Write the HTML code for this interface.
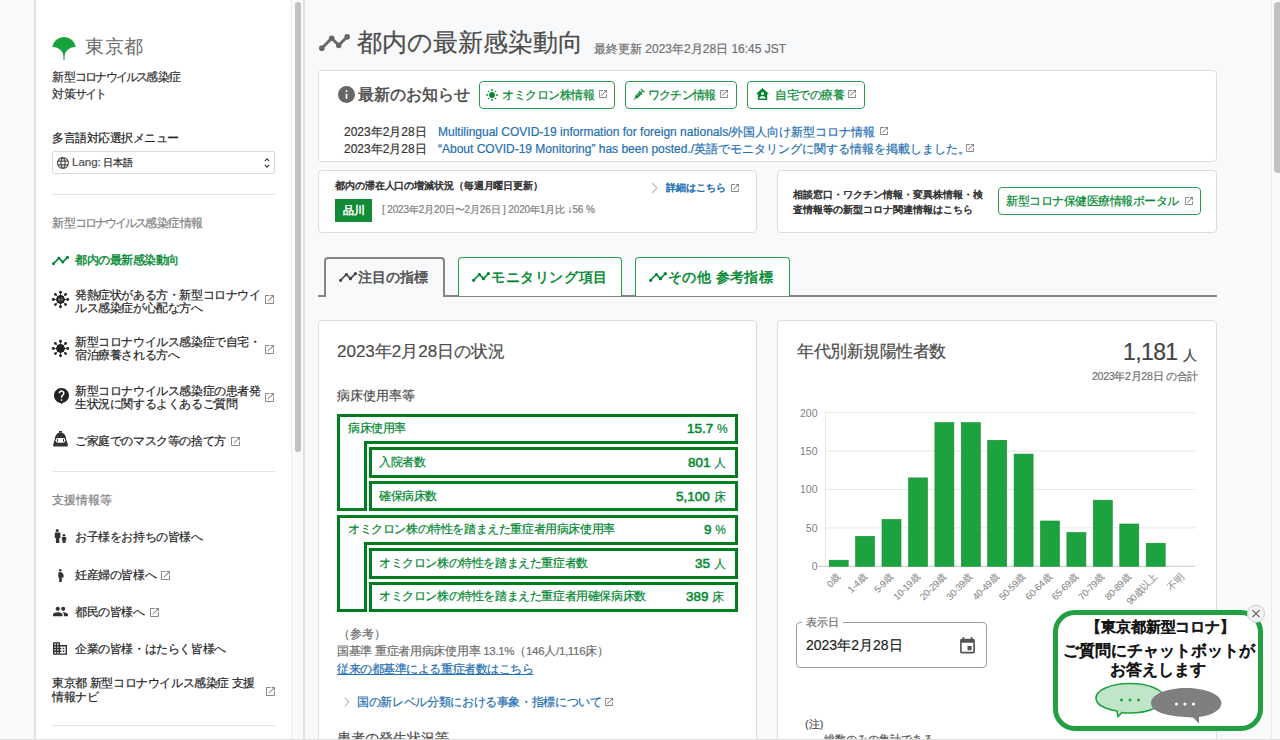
<!DOCTYPE html>
<html lang="ja"><head><meta charset="utf-8">
<style>
html,body{margin:0;padding:0}
body{width:1280px;height:740px;overflow:hidden;position:relative;background:#f8f9fa;font-family:"Liberation Sans",sans-serif;color:#4d4d4d}
.a{position:absolute;white-space:nowrap;line-height:1;-webkit-text-stroke-width:0.2px}
svg{position:absolute;overflow:visible}
.card{position:absolute;background:#fff;border:1px solid #dcdcdc;border-radius:4px;box-sizing:border-box}
.g{color:#008830}
.btn{position:absolute;box-sizing:border-box;border:1px solid #2a9d4b;border-radius:4px;background:#fff}
.hr{position:absolute;height:1px;background:#e3e3e3}
.ext{position:absolute}
.a[style*="font-weight:bold"]{font-weight:normal !important;-webkit-text-stroke-width:0.5px}
</style></head><body>

<!-- ===== SIDEBAR ===== -->
<div style="position:absolute;left:34px;top:0;width:2px;height:740px;background:#e2e2e2"></div>
<div style="position:absolute;left:36px;top:0;width:255px;height:740px;background:#fff"></div>
<!-- sidebar scrollbar -->
<div style="position:absolute;left:291px;top:0;width:14px;height:740px;background:#fafafa"></div>
<div style="position:absolute;left:291px;top:0;width:1px;height:740px;background:#ededed"></div>
<div style="position:absolute;left:303px;top:0;width:2px;height:740px;background:#e0e0e0"></div>
<div style="position:absolute;left:295px;top:2px;width:6px;height:450px;background:#c1c1c1;border-radius:3px"></div>

<!-- logo -->
<svg style="left:52px;top:36px" width="24" height="24" viewBox="0 0 24 24">
<path d="M0.3 11 A11.85 11.85 0 0 1 23.7 11 Q14.6 11.2 12.7 19.2 L12.5 24 L11.5 24 L11.3 19.2 Q9.4 11.2 0.3 11 Z" fill="#1aa33c"/>
</svg>
<div class="a" style="left:85px;top:37.5px;font-size:18.5px;letter-spacing:0.6px;color:#6a6a6a;-webkit-text-stroke-width:0">東京都</div>
<div class="a" style="left:52px;top:69px;font-size:12px;color:#333;line-height:16.5px;letter-spacing:-0.4px;-webkit-text-stroke:0.2px #333">新型<span style="letter-spacing:-1.9px">コロナウイルス</span>感染症<br>対策<span style="letter-spacing:-2.2px">サイト</span></div>

<div class="a" style="left:52px;top:132px;font-size:12px;color:#222;letter-spacing:-0.5px;-webkit-text-stroke:0.2px #222">多言語対応選択メニュー</div>
<div style="position:absolute;left:52px;top:151px;width:223px;height:23px;box-sizing:border-box;border:1px solid #dadada;border-radius:2px;background:#fff"></div>
<svg style="left:57px;top:157px" width="12" height="12" viewBox="2 2 20 20"><path fill="#4d4d4d" d="M16.36,14C16.44,13.34 16.5,12.68 16.5,12C16.5,11.32 16.44,10.66 16.36,10H19.74C19.9,10.64 20,11.31 20,12C20,12.69 19.9,13.36 19.74,14M14.59,19.56C15.19,18.45 15.65,17.25 15.97,16H18.92C17.960,17.65 16.43,18.93 14.59,19.56M14.34,14H9.66C9.56,13.34 9.5,12.68 9.5,12C9.5,11.32 9.56,10.65 9.66,10H14.34C14.43,10.65 14.5,11.32 14.5,12C14.5,12.68 14.43,13.34 14.34,14M12,19.96C11.17,18.76 10.5,17.43 10.090,16H13.91C13.5,17.43 12.83,18.76 12,19.96M8,8H5.08C6.03,6.34 7.57,5.06 9.4,4.44C8.8,5.55 8.35,6.75 8,8M5.08,16H8C8.35,17.25 8.8,18.45 9.4,19.56C7.57,18.93 6.03,17.65 5.080,16M4.26,14C4.1,13.36 4,12.69 4,12C4,11.31 4.1,10.64 4.26,10H7.64C7.56,10.66 7.5,11.32 7.5,12C7.5,12.68 7.56,13.34 7.64,14M12,4.03C12.83,5.23 13.5,6.57 13.91,8H10.09C10.5,6.57 11.17,5.23 12,4.03M18.92,8H15.97C15.65,6.75 15.19,5.55 14.59,4.44C16.43,5.07 17.96,6.34 18.92,8M12,2C6.47,2 2,6.5 2,12A10,10 0 0,0 12,22A10,10 0 0,0 22,12A10,10 0 0,0 12,2Z"/></svg>
<div class="a" style="left:72px;top:157px;font-size:11.5px;color:#4d4d4d">Lang:</div>
<div class="a" style="left:103px;top:158px;font-size:10.3px;color:#222">日本語</div>
<svg style="left:264px;top:157px" width="6" height="12" viewBox="0 0 6 12"><path d="M0.8 4.2 L3 1.8 L5.2 4.2 M0.8 7.8 L3 10.2 L5.2 7.8" fill="none" stroke="#333" stroke-width="1.1"/></svg>

<div class="hr" style="left:52px;top:194px;width:223px"></div>
<div class="a" style="left:52px;top:217px;font-size:12px;color:#808080;letter-spacing:-0.5px">新型<span style="letter-spacing:-2.0px">コロナウイルス</span>感染症情報</div>

<!-- active -->
<svg style="left:52px;top:252px" width="17" height="17" viewBox="1 1 22 22"><path fill="#008830" d="M3,14L3.5,14.07L8.07,9.5C7.89,8.85 8.06,8.11 8.59,7.59C9.37,6.8 10.63,6.8 11.41,7.59C11.94,8.11 12.11,8.85 11.93,9.5L14.5,12.07L15,12C15.18,12 15.35,12 15.5,12.07L19.07,8.5C19,8.35 19,8.18 19,8A2,2 0 0,1 21,6A2,2 0 0,1 23,8A2,2 0 0,1 21,10C20.82,10 20.65,10 20.5,9.930L16.93,13.5C17,13.65 17,13.82 17,14A2,2 0 0,1 15,16A2,2 0 0,1 13,14L13.07,13.5L10.5,10.93C10.18,11 9.82,11 9.5,10.93L4.93,15.5L5,16A2,2 0 0,1 3,18A2,2 0 0,1 1,16A2,2 0 0,1 3,14Z"/></svg>
<div class="a g" style="left:75px;top:254px;font-size:12px;font-weight:bold;letter-spacing:-0.45px;-webkit-text-stroke-width:0.35px">都内の最新感染動向</div>

<!-- item 2 -->
<svg style="left:52px;top:291px" width="17" height="17" viewBox="0 0 17 17" id="vir1">
<circle cx="8.5" cy="8.5" r="4.4" fill="#222"/><path d="M8.5 1.3V15.7M1.3 8.5H15.7M3.4 3.4L13.6 13.6M13.6 3.4L3.4 13.6" stroke="#222" stroke-width="0.8"/>
<g fill="#222"><circle cx="8.5" cy="1.3" r="1.45"/><circle cx="8.5" cy="15.7" r="1.45"/><circle cx="1.3" cy="8.5" r="1.45"/><circle cx="15.7" cy="8.5" r="1.45"/>
<circle cx="3.4" cy="3.4" r="1.4"/><circle cx="13.6" cy="3.4" r="1.4"/><circle cx="3.4" cy="13.6" r="1.4"/><circle cx="13.6" cy="13.6" r="1.4"/></g>
<path d="M7 6.5v4M10 6.5v4M6.5 8.5h4" stroke="#fff" stroke-width="0.6" opacity="0.6"/>
</svg>
<div class="a" style="left:75px;top:289px;font-size:12px;line-height:13.3px;color:#262626;letter-spacing:-0.4px">発熱症状がある方・新型コロナウイ<br>ルス感染症が心配な方へ</div>
<svg class="ext" style="left:265px;top:295px" width="9" height="9" viewBox="3 3 18 18"><path fill="#888" d="M14,3V5H17.59L7.76,14.83L9.17,16.24L19,6.41V10H21V3M19,19H5V5H12V3H5C3.89,3 3,3.9 3,5V19A2,2 0 0,0 5,21H19A2,2 0 0,0 21,19V12H19V19Z"/></svg>

<!-- item 3 -->
<svg style="left:52px;top:340px" width="17" height="17" viewBox="0 0 17 17">
<circle cx="8.5" cy="8.5" r="4.4" fill="#222"/><path d="M8.5 1.3V15.7M1.3 8.5H15.7M3.4 3.4L13.6 13.6M13.6 3.4L3.4 13.6" stroke="#222" stroke-width="0.8"/>
<g fill="#222"><circle cx="8.5" cy="1.3" r="1.45"/><circle cx="8.5" cy="15.7" r="1.45"/><circle cx="1.3" cy="8.5" r="1.45"/><circle cx="15.7" cy="8.5" r="1.45"/>
<circle cx="3.4" cy="3.4" r="1.4"/><circle cx="13.6" cy="3.4" r="1.4"/><circle cx="3.4" cy="13.6" r="1.4"/><circle cx="13.6" cy="13.6" r="1.4"/></g>
</svg>
<div class="a" style="left:75px;top:336px;font-size:12px;line-height:13.3px;color:#262626;letter-spacing:-0.4px">新型コロナウイルス感染症で自宅・<br>宿泊療養される方へ</div>
<svg class="ext" style="left:265px;top:345px" width="9" height="9" viewBox="3 3 18 18"><path fill="#888" d="M14,3V5H17.59L7.76,14.83L9.17,16.24L19,6.41V10H21V3M19,19H5V5H12V3H5C3.89,3 3,3.9 3,5V19A2,2 0 0,0 5,21H19A2,2 0 0,0 21,19V12H19V19Z"/></svg>

<!-- item 4 -->
<svg style="left:53.5px;top:388px" width="15" height="16" viewBox="2 2 20 21.3"><path fill="#222" d="M12 2C6.48 2 2 6.48 2 12c0 5.2 4 9.5 9 10l1.5 1.5 1-1.6C18 21 22 17 22 12 22 6.48 17.52 2 12 2zm1 17h-2v-2h2v2zm2.07-7.75l-.9.92C13.45 12.9 13 13.5 13 15h-2v-.5c0-1.1.45-2.1 1.17-2.830l1.24-1.26c.37-.36.59-.86.59-1.41 0-1.1-.9-2-2-2s-2 .9-2 2H8c0-2.21 1.79-4 4-4s4 1.79 4 4c0 .88-.36 1.68-.93 2.25z"/></svg>
<div class="a" style="left:75px;top:385px;font-size:12px;line-height:13.3px;color:#262626;letter-spacing:-0.4px">新型コロナウイルス感染症の患者発<br>生状況に関するよくあるご質問</div>
<svg class="ext" style="left:265px;top:393px" width="9" height="9" viewBox="3 3 18 18"><path fill="#888" d="M14,3V5H17.59L7.76,14.83L9.17,16.24L19,6.41V10H21V3M19,19H5V5H12V3H5C3.89,3 3,3.9 3,5V19A2,2 0 0,0 5,21H19A2,2 0 0,0 21,19V12H19V19Z"/></svg>

<!-- item 5 -->
<svg style="left:52px;top:431px" width="17" height="16" viewBox="0 0 17 16"><path fill="#333" d="M7 0h3v1.8h-3z M8.5 1.6C5.2 1.6 3.3 4 2.8 8.2 L1.1 13.8 C0.9 14.9 1.4 15.6 2.4 15.6 H14.6 C15.6 15.6 16.1 14.9 15.9 13.8 L14.2 8.2 C13.7 4 11.8 1.6 8.5 1.6z"/><rect x="3.6" y="6.9" width="9.8" height="4.8" rx="2.4" fill="#fff"/><path d="M5.5 8.1v2.4M11.5 8.1v2.4" stroke="#333" stroke-width="1"/></svg>
<div class="a" style="left:75px;top:435px;font-size:12px;color:#262626;letter-spacing:-0.4px">ご家庭でのマスク等の捨て方</div>
<svg class="ext" style="left:231px;top:437px" width="9" height="9" viewBox="3 3 18 18"><path fill="#888" d="M14,3V5H17.59L7.76,14.83L9.17,16.24L19,6.41V10H21V3M19,19H5V5H12V3H5C3.89,3 3,3.9 3,5V19A2,2 0 0,0 5,21H19A2,2 0 0,0 21,19V12H19V19Z"/></svg>

<div class="hr" style="left:52px;top:471px;width:223px"></div>
<div class="a" style="left:52px;top:494px;font-size:12px;color:#808080">支援情報等</div>

<!-- support items -->
<svg style="left:54px;top:529px" width="13" height="14" viewBox="0 0 13 14"><g fill="#333"><circle cx="3.2" cy="1.5" r="1.5"/><path d="M1 3.6h4.4c.6 0 1 .4 1 1V9H5.3v5H1.9V9H.8V4.6c0-.6.2-1 .2-1z"/><circle cx="10" cy="6.2" r="1.3"/><path d="M8.5 8h3c.5 0 .8.3.8.8v2.4h-.8V14H8.6v-2.8h-.8V8.8c0-.5.3-.8.7-.8z"/></g></svg>
<div class="a" style="left:75px;top:531px;font-size:12px;color:#262626;letter-spacing:-0.4px">お子様をお持ちの皆様へ</div>

<svg style="left:57px;top:569px" width="7" height="13" viewBox="0 0 7 13"><g fill="#333"><circle cx="3.2" cy="1.3" r="1.3"/><path d="M1.6 3.2h3c1.2.8 2 1.8 2 3.3V8.5H4.8V13H2.2V8.5H1.3V4.8c0-.9 0-1.6.3-1.6z"/></g></svg>
<div class="a" style="left:75px;top:569px;font-size:12px;color:#262626;letter-spacing:-0.4px">妊産婦の皆様へ</div>
<svg class="ext" style="left:161px;top:571px" width="9" height="9" viewBox="3 3 18 18"><path fill="#888" d="M14,3V5H17.59L7.76,14.83L9.17,16.24L19,6.41V10H21V3M19,19H5V5H12V3H5C3.89,3 3,3.9 3,5V19A2,2 0 0,0 5,21H19A2,2 0 0,0 21,19V12H19V19Z"/></svg>

<svg style="left:53px;top:604px" width="15" height="15" viewBox="1 3 22 18"><path fill="#333" d="M16 11c1.66 0 2.99-1.34 2.99-3S17.66 5 16 5c-1.660 0-3 1.34-3 3s1.34 3 3 3zm-8 0c1.66 0 2.99-1.34 2.99-3S9.66 5 8 5C6.34 5 5 6.34 5 8s1.34 3 3 3zm0 2c-2.33 0-7 1.17-7 3.5V19h14v-2.5c0-2.33-4.67-3.5-7-3.5zm8 0c-.29 0-.62.02-.97.05 1.16.84 1.97 1.97 1.97 3.45V19h6v-2.5c0-2.33-4.67-3.5-7-3.5z"/></svg>
<div class="a" style="left:75px;top:606px;font-size:12px;color:#262626;letter-spacing:-0.4px">都民の皆様へ</div>
<svg class="ext" style="left:150px;top:608px" width="9" height="9" viewBox="3 3 18 18"><path fill="#888" d="M14,3V5H17.59L7.76,14.83L9.17,16.24L19,6.41V10H21V3M19,19H5V5H12V3H5C3.89,3 3,3.9 3,5V19A2,2 0 0,0 5,21H19A2,2 0 0,0 21,19V12H19V19Z"/></svg>

<svg style="left:53px;top:642px" width="14" height="13" viewBox="2 3 20 18"><path fill="#333" d="M12 7V3H2v18h20V7H12zM6 19H4v-2h2v2zm0-4H4v-2h2v2zm0-4H4V9h2v2zm0-4H4V5h2v2zm4 12H8v-2h2v2zm0-4H8v-2h2v2zm0-4H8V9h2v2zm0-4H8V5h2v2zm10 12h-8v-2h2v-2h-2v-2h2v-2h-2V9h8v10zm-2-8h-2v2h2v-2zm0 4h-2v2h2v-2z"/></svg>
<div class="a" style="left:75px;top:643px;font-size:12px;color:#262626;letter-spacing:-0.4px">企業の皆様・はたらく皆様へ</div>

<div class="a" style="left:52px;top:677px;font-size:12px;line-height:13.5px;color:#262626;letter-spacing:-0.4px">東京都 新型コロナウイルス感染症 支援<br>情報ナビ</div>
<svg class="ext" style="left:266px;top:687px" width="9" height="9" viewBox="3 3 18 18"><path fill="#888" d="M14,3V5H17.59L7.76,14.83L9.17,16.24L19,6.41V10H21V3M19,19H5V5H12V3H5C3.89,3 3,3.9 3,5V19A2,2 0 0,0 5,21H19A2,2 0 0,0 21,19V12H19V19Z"/></svg>
<div class="hr" style="left:52px;top:725px;width:223px"></div>

<!-- ===== MAIN ===== -->
<!-- main scrollbar -->
<div style="position:absolute;left:1271px;top:0;width:9px;height:740px;background:#fafafa;border-left:1px solid #ececec;box-sizing:border-box"></div>
<div style="position:absolute;left:1274px;top:2px;width:8px;height:171px;background:#c1c1c1;border-radius:4px"></div>

<!-- page title -->
<svg style="left:318.5px;top:31px" width="31" height="23" viewBox="1 5 22 14"><path fill="#666" d="M3,14L3.5,14.07L8.07,9.5C7.89,8.85 8.06,8.11 8.59,7.59C9.37,6.8 10.63,6.8 11.41,7.59C11.94,8.11 12.11,8.85 11.93,9.5L14.5,12.07L15,12C15.18,12 15.35,12 15.5,12.07L19.07,8.5C19,8.35 19,8.18 19,8A2,2 0 0,1 21,6A2,2 0 0,1 23,8A2,2 0 0,1 21,10C20.82,10 20.65,10 20.5,9.93L16.93,13.5C17,13.65 17,13.82 17,14A2,2 0 0,1 15,16A2,2 0 0,1 13,14L13.07,13.5L10.5,10.93C10.18,11 9.82,11 9.5,10.93L4.93,15.5L5,16A2,2 0 0,1 3,18A2,2 0 0,1 1,16A2,2 0 0,1 3,14Z"/></svg>
<div class="a" style="left:357px;top:31px;font-size:24.5px;color:#4d4d4d">都内の最新感染動向</div>
<div class="a" style="left:594px;top:43px;font-size:12px;color:#707070">最終更新 2023年2月28日 16:45 JST</div>

<!-- card 1: news -->
<div class="card" style="left:318px;top:70px;width:899px;height:92px"></div>
<svg style="left:338px;top:86px" width="17" height="17" viewBox="2 2 20 20"><path fill="#666" d="M13,9H11V7H13M13,17H11V11H13M12,2A10,10 0 0,0 2,12A10,10 0 0,0 12,22A10,10 0 0,0 22,12A10,10 0 0,0 12,2Z"/></svg>
<div class="a" style="left:358px;top:87px;font-size:15.6px;font-weight:bold;color:#4d4d4d">最新のお知らせ</div>

<div class="btn" style="left:479px;top:81px;width:136px;height:28px"></div>
<svg style="left:486px;top:89px" width="12" height="12" viewBox="0 0 12 12"><g fill="#008830"><circle cx="6" cy="6" r="2.9"/><circle cx="6" cy="1" r=".9"/><circle cx="6" cy="11" r=".9"/><circle cx="1" cy="6" r=".9"/><circle cx="11" cy="6" r=".9"/><circle cx="2.5" cy="2.5" r=".8"/><circle cx="9.5" cy="2.5" r=".8"/><circle cx="2.5" cy="9.5" r=".8"/><circle cx="9.5" cy="9.5" r=".8"/></g></svg>
<div class="a g" style="left:502px;top:89px;font-size:12px;letter-spacing:-0.5px">オミクロン株情報</div>
<svg class="ext" style="left:599px;top:90px" width="8" height="8" viewBox="3 3 18 18"><path fill="#888" d="M14,3V5H17.59L7.76,14.83L9.17,16.24L19,6.41V10H21V3M19,19H5V5H12V3H5C3.89,3 3,3.9 3,5V19A2,2 0 0,0 5,21H19A2,2 0 0,0 21,19V12H19V19Z"/></svg>

<div class="btn" style="left:625px;top:81px;width:112px;height:28px"></div>
<svg style="left:631.5px;top:88.5px" width="13" height="13" viewBox="0 0 13 13"><g transform="translate(11.2,1.2) rotate(45) scale(0.86)" fill="#008830"><rect x="-3" y="0" width="6" height="1.3"/><rect x="-0.65" y="1.2" width="1.3" height="2.6"/><rect x="-2.6" y="3.7" width="5.2" height="1.2"/><rect x="-1.95" y="4.8" width="3.9" height="6.6"/><path d="M-1.95 11.4H1.95L0.6 12.9H-0.6Z"/><rect x="-0.4" y="12.8" width="0.8" height="2.8"/><path d="M-1.95 6.9H0.2M-1.95 9H0.2" stroke="#fff" stroke-width="0.8"/></g></svg>
<div class="a g" style="left:648px;top:89px;font-size:12px;letter-spacing:-0.8px">ワクチン情報</div>
<svg class="ext" style="left:720px;top:90px" width="8" height="8" viewBox="3 3 18 18"><path fill="#888" d="M14,3V5H17.59L7.76,14.83L9.17,16.24L19,6.41V10H21V3M19,19H5V5H12V3H5C3.89,3 3,3.9 3,5V19A2,2 0 0,0 5,21H19A2,2 0 0,0 21,19V12H19V19Z"/></svg>

<div class="btn" style="left:747px;top:81px;width:118px;height:28px"></div>
<svg style="left:756px;top:88px" width="13" height="12" viewBox="0 0 13 12"><path fill="#008830" d="M6.5 0L0 6h1.8v6h9.4V6H13z"/><circle cx="6.5" cy="5.5" r="1.5" fill="#fff"/><path d="M3.3 10.4c0-1.4 1.6-2.4 3.2-2.4s3.2 1 3.2 2.4z" fill="#fff"/></svg>
<div class="a g" style="left:775px;top:89px;font-size:12px;letter-spacing:-0.5px">自宅での療養</div>
<svg class="ext" style="left:848px;top:90px" width="8" height="8" viewBox="3 3 18 18"><path fill="#888" d="M14,3V5H17.59L7.76,14.83L9.17,16.24L19,6.41V10H21V3M19,19H5V5H12V3H5C3.89,3 3,3.9 3,5V19A2,2 0 0,0 5,21H19A2,2 0 0,0 21,19V12H19V19Z"/></svg>

<div class="a" style="left:344px;top:126px;font-size:12px;color:#333">2023年2月28日</div>
<div class="a" style="left:438px;top:126px;font-size:12px;color:#1f70b3">Multilingual COVID-19 information for foreign nationals/外国人向け新型コロナ情報</div>
<svg class="ext" style="left:880px;top:127px" width="8" height="8" viewBox="3 3 18 18"><path fill="#888" d="M14,3V5H17.59L7.76,14.83L9.17,16.24L19,6.41V10H21V3M19,19H5V5H12V3H5C3.89,3 3,3.9 3,5V19A2,2 0 0,0 5,21H19A2,2 0 0,0 21,19V12H19V19Z"/></svg>
<div class="a" style="left:344px;top:143px;font-size:12px;color:#333">2023年2月28日</div>
<div class="a" style="left:438px;top:143px;font-size:12px;color:#1f70b3">“About COVID-19 Monitoring” has been posted./英語でモニタリングに関する情報を掲載しました。</div>
<svg class="ext" style="left:966px;top:144px" width="8" height="8" viewBox="3 3 18 18"><path fill="#888" d="M14,3V5H17.59L7.76,14.83L9.17,16.24L19,6.41V10H21V3M19,19H5V5H12V3H5C3.89,3 3,3.9 3,5V19A2,2 0 0,0 5,21H19A2,2 0 0,0 21,19V12H19V19Z"/></svg>

<!-- card 2 -->
<div class="card" style="left:318px;top:170px;width:439px;height:63px"></div>
<div class="a" style="left:335px;top:181px;font-size:10px;font-weight:bold;color:#333;letter-spacing:-0.1px">都内の滞在人口の増減状況（毎週月曜日更新）</div>
<div style="position:absolute;left:335px;top:199px;width:37px;height:23px;background:#138a35"></div>
<div class="a" style="left:343px;top:205px;font-size:11px;font-weight:bold;color:#fff">品川</div>
<div class="a" style="left:382px;top:205px;font-size:10px;color:#808080;letter-spacing:-0.15px">[ 2023年2月20日〜2月26日 ] 2020年1月比 ↓56 %</div>
<svg style="left:651px;top:182px" width="7" height="12" viewBox="0 0 7 12"><path d="M1 1l5 5-5 5" fill="none" stroke="#bbb" stroke-width="1.2"/></svg>
<div class="a" style="left:666px;top:183px;font-size:10px;font-weight:bold;color:#1f70b3">詳細はこちら</div>
<svg class="ext" style="left:731px;top:184px" width="8" height="8" viewBox="3 3 18 18"><path fill="#888" d="M14,3V5H17.59L7.76,14.83L9.17,16.24L19,6.41V10H21V3M19,19H5V5H12V3H5C3.89,3 3,3.9 3,5V19A2,2 0 0,0 5,21H19A2,2 0 0,0 21,19V12H19V19Z"/></svg>

<!-- card 3 -->
<div class="card" style="left:777px;top:170px;width:440px;height:63px"></div>
<div class="a" style="left:793px;top:186.5px;font-size:10px;line-height:15.2px;font-weight:bold;color:#333">相談窓口・ワクチン情報・変異株情報・検<br>査情報等の新型コロナ関連情報はこちら</div>
<div class="btn" style="left:998px;top:187px;width:203px;height:28px;border-width:1.5px"></div>
<div class="a g" style="left:1006px;top:195px;font-size:12.3px;letter-spacing:-0.5px">新型コロナ保健医療情報ポータル</div>
<svg class="ext" style="left:1185px;top:197px" width="8" height="8" viewBox="3 3 18 18"><path fill="#888" d="M14,3V5H17.59L7.76,14.83L9.17,16.24L19,6.41V10H21V3M19,19H5V5H12V3H5C3.89,3 3,3.9 3,5V19A2,2 0 0,0 5,21H19A2,2 0 0,0 21,19V12H19V19Z"/></svg>

<!-- tabs -->
<div style="position:absolute;left:318px;top:295px;width:899px;height:2px;background:#858585"></div>
<div style="position:absolute;left:324px;top:257px;width:121px;height:40px;box-sizing:border-box;border:2px solid #858585;border-bottom:none;border-radius:4px 4px 0 0;background:#f8f9fa"></div>
<svg style="left:339px;top:270px" width="18" height="14" viewBox="1 5 22 14"><path fill="#444" d="M3,14L3.5,14.07L8.07,9.5C7.89,8.85 8.06,8.11 8.59,7.59C9.37,6.8 10.63,6.8 11.41,7.59C11.94,8.11 12.11,8.85 11.93,9.5L14.5,12.07L15,12C15.18,12 15.35,12 15.5,12.07L19.07,8.5C19,8.35 19,8.18 19,8A2,2 0 0,1 21,6A2,2 0 0,1 23,8A2,2 0 0,1 21,10C20.82,10 20.65,10 20.5,9.93L16.93,13.5C17,13.65 17,13.82 17,14A2,2 0 0,1 15,16A2,2 0 0,1 13,14L13.07,13.5L10.5,10.93C10.18,11 9.82,11 9.5,10.93L4.93,15.5L5,16A2,2 0 0,1 3,18A2,2 0 0,1 1,16A2,2 0 0,1 3,14Z"/></svg>
<div class="a" style="left:358px;top:270px;font-size:14.2px;font-weight:bold;color:#4d4d4d">注目の指標</div>

<div style="position:absolute;left:458px;top:257px;width:164px;height:39px;box-sizing:border-box;border:1px solid #2a9d4b;border-bottom:none;border-radius:4px 4px 0 0;background:#fff"></div>
<svg style="left:472px;top:270px" width="18" height="14" viewBox="1 5 22 14"><path fill="#008830" d="M3,14L3.5,14.07L8.07,9.5C7.89,8.85 8.06,8.11 8.59,7.59C9.37,6.8 10.63,6.8 11.41,7.59C11.94,8.11 12.11,8.85 11.93,9.5L14.5,12.07L15,12C15.18,12 15.35,12 15.5,12.07L19.07,8.5C19,8.35 19,8.18 19,8A2,2 0 0,1 21,6A2,2 0 0,1 23,8A2,2 0 0,1 21,10C20.82,10 20.65,10 20.5,9.93L16.93,13.5C17,13.65 17,13.82 17,14A2,2 0 0,1 15,16A2,2 0 0,1 13,14L13.07,13.5L10.5,10.93C10.18,11 9.82,11 9.5,10.93L4.93,15.5L5,16A2,2 0 0,1 3,18A2,2 0 0,1 1,16A2,2 0 0,1 3,14Z"/></svg>
<div class="a g" style="left:491px;top:270px;font-size:14.2px;font-weight:bold;letter-spacing:0.6px">モニタリング項目</div>

<div style="position:absolute;left:635px;top:257px;width:155px;height:39px;box-sizing:border-box;border:1px solid #2a9d4b;border-bottom:none;border-radius:4px 4px 0 0;background:#fff"></div>
<svg style="left:649px;top:270px" width="18" height="14" viewBox="1 5 22 14"><path fill="#008830" d="M3,14L3.5,14.07L8.07,9.5C7.89,8.85 8.06,8.11 8.59,7.59C9.37,6.8 10.63,6.8 11.41,7.59C11.94,8.11 12.11,8.85 11.93,9.5L14.5,12.07L15,12C15.18,12 15.35,12 15.5,12.07L19.07,8.5C19,8.35 19,8.18 19,8A2,2 0 0,1 21,6A2,2 0 0,1 23,8A2,2 0 0,1 21,10C20.82,10 20.65,10 20.5,9.93L16.93,13.5C17,13.65 17,13.82 17,14A2,2 0 0,1 15,16A2,2 0 0,1 13,14L13.07,13.5L10.5,10.93C10.18,11 9.82,11 9.5,10.93L4.93,15.5L5,16A2,2 0 0,1 3,18A2,2 0 0,1 1,16A2,2 0 0,1 3,14Z"/></svg>
<div class="a g" style="left:668px;top:270px;font-size:14.2px;font-weight:bold;letter-spacing:0.4px">その他 参考指標</div>

<!-- card 4: status -->
<div class="card" style="left:318px;top:320px;width:439px;height:440px"></div>
<div class="a" style="left:337px;top:343px;font-size:17px;color:#4d4d4d">2023年2月28日の状況</div>
<div class="a" style="left:337px;top:389px;font-size:13.3px;color:#4d4d4d">病床使用率等</div>

<svg style="left:0;top:0" width="1280" height="740">
<g fill="none" stroke="#007d1e" stroke-width="3">
<path d="M338.5 415.5 H736.5 V442.5 H365.5 V509.5 H338.5 Z"/>
<rect x="370.5" y="448.5" width="366" height="28"/>
<rect x="370.5" y="482.5" width="366" height="27"/>
<path d="M338.5 516.5 H736.5 V543.5 H365.5 V610.5 H338.5 Z"/>
<rect x="370.5" y="549.5" width="366" height="28"/>
<rect x="370.5" y="583.5" width="366" height="27"/>
</g>
</svg>
<div class="a g" style="left:348px;top:422px;font-size:12px;letter-spacing:-0.4px">病床使用率</div>
<div class="a g" style="left:687px;top:422px;font-size:13.5px;font-weight:bold">15.7 <span style="font-size:12px;font-weight:normal;-webkit-text-stroke-width:0.15px">%</span></div>
<div class="a g" style="left:379px;top:456px;font-size:12px;letter-spacing:-0.4px">入院者数</div>
<div class="a g" style="left:688px;top:456px;font-size:13.5px;font-weight:bold">801 <span style="font-size:12px;font-weight:normal;-webkit-text-stroke-width:0.15px">人</span></div>
<div class="a g" style="left:379px;top:490px;font-size:12px;letter-spacing:-0.4px">確保病床数</div>
<div class="a g" style="left:676px;top:490px;font-size:13.5px;font-weight:bold">5,100 <span style="font-size:12px;font-weight:normal;-webkit-text-stroke-width:0.15px">床</span></div>
<div class="a g" style="left:348px;top:523px;font-size:12px;letter-spacing:-0.4px">オミクロン株の特性を踏まえた重症者用病床使用率</div>
<div class="a g" style="left:704px;top:523px;font-size:13.5px;font-weight:bold">9 <span style="font-size:12px;font-weight:normal;-webkit-text-stroke-width:0.15px">%</span></div>
<div class="a g" style="left:379px;top:557px;font-size:12px;letter-spacing:-0.4px">オミクロン株の特性を踏まえた重症者数</div>
<div class="a g" style="left:695px;top:557px;font-size:13.5px;font-weight:bold">35 <span style="font-size:12px;font-weight:normal;-webkit-text-stroke-width:0.15px">人</span></div>
<div class="a g" style="left:379px;top:590px;font-size:12px;letter-spacing:-0.4px">オミクロン株の特性を踏まえた重症者用確保病床数</div>
<div class="a g" style="left:686px;top:590px;font-size:13.5px;font-weight:bold">389 <span style="font-size:12px;font-weight:normal;-webkit-text-stroke-width:0.15px">床</span></div>

<div class="a" style="left:338px;top:629px;font-size:11.5px;color:#707070">（参考）</div>
<div class="a" style="left:337px;top:646px;font-size:11.5px;color:#707070;letter-spacing:-0.3px">国基準 重症者用病床使用率 13.1%（146人/1,116床）</div>
<div class="a" style="left:337px;top:663px;font-size:12.2px;color:#1f70b3;text-decoration:underline;letter-spacing:-0.45px">従来の都基準による重症者数はこちら</div>
<svg style="left:344px;top:697px" width="6" height="10" viewBox="0 0 6 10"><path d="M.7 .7l4.3 4.3-4.3 4.3" fill="none" stroke="#bbb" stroke-width="1.1"/></svg>
<div class="a" style="left:357px;top:696px;font-size:12.2px;color:#1f70b3;letter-spacing:-0.35px">国の新レベル分類における事象・指標について</div>
<svg class="ext" style="left:605px;top:698px" width="8" height="8" viewBox="3 3 18 18"><path fill="#888" d="M14,3V5H17.59L7.76,14.83L9.17,16.24L19,6.41V10H21V3M19,19H5V5H12V3H5C3.89,3 3,3.9 3,5V19A2,2 0 0,0 5,21H19A2,2 0 0,0 21,19V12H19V19Z"/></svg>
<div class="a" style="left:337px;top:731px;font-size:14px;color:#4d4d4d">患者の発生状況等</div>

<!-- card 5: chart -->
<div class="card" style="left:777px;top:320px;width:440px;height:440px"></div>
<div class="a" style="left:797px;top:343px;font-size:17px;color:#4d4d4d;letter-spacing:-0.5px">年代別新規陽性者数</div>
<div class="a" style="left:1123px;top:341px;font-size:23px;color:#444;letter-spacing:-0.6px">1,181 <span style="font-size:13.5px;letter-spacing:0">人</span></div>
<div class="a" style="left:1092px;top:371px;font-size:10.6px;color:#707070;letter-spacing:-0.3px">2023年2月28日 の合計</div>

<svg style="left:0;top:0" width="1280" height="740" id="chart">
<line x1="825.5" y1="412.6" x2="1195.3" y2="412.6" stroke="#e6e6e6" stroke-width="1"/>
<line x1="825.5" y1="451.0" x2="1195.3" y2="451.0" stroke="#e6e6e6" stroke-width="1"/>
<line x1="825.5" y1="489.4" x2="1195.3" y2="489.4" stroke="#e6e6e6" stroke-width="1"/>
<line x1="825.5" y1="527.9" x2="1195.3" y2="527.9" stroke="#e6e6e6" stroke-width="1"/>
<line x1="825.5" y1="412" x2="825.5" y2="566.3" stroke="#e6e6e6" stroke-width="1"/>
<line x1="818" y1="566.3" x2="1195.3" y2="566.3" stroke="#cccccc" stroke-width="1"/>
<g fill="#1ca23f" stroke="#13902f" stroke-width="0.6">
<rect x="829.2" y="560.2" width="19.0" height="6.1"/>
<rect x="855.6" y="536.3" width="19.0" height="30.0"/>
<rect x="882.0" y="519.4" width="19.0" height="46.9"/>
<rect x="908.5" y="477.9" width="19.0" height="88.4"/>
<rect x="934.9" y="422.6" width="19.0" height="143.7"/>
<rect x="961.3" y="422.6" width="19.0" height="143.7"/>
<rect x="987.7" y="440.3" width="19.0" height="126.0"/>
<rect x="1014.1" y="454.1" width="19.0" height="112.2"/>
<rect x="1040.5" y="521.0" width="19.0" height="45.3"/>
<rect x="1066.9" y="532.5" width="19.0" height="33.8"/>
<rect x="1093.3" y="500.2" width="19.0" height="66.1"/>
<rect x="1119.8" y="524.0" width="19.0" height="42.3"/>
<rect x="1146.2" y="543.2" width="19.0" height="23.1"/>
</g>
<g font-family="Liberation Sans, sans-serif" font-size="10.5" fill="#808080" text-anchor="end">
<text x="817.5" y="416.5">200</text>
<text x="817.5" y="454.5">150</text>
<text x="817.5" y="493">100</text>
<text x="817.5" y="531.5">50</text>
<text x="817.5" y="570">0</text>
</g>
<g font-family="Liberation Sans, sans-serif" font-size="9.6" fill="#808080" text-anchor="end" letter-spacing="-0.3" id="xl">
<text transform="translate(841.2,577.5) rotate(-45)">0歳</text>
<text transform="translate(867.6,577.5) rotate(-45)">1-4歳</text>
<text transform="translate(894.0,577.5) rotate(-45)">5-9歳</text>
<text transform="translate(920.5,577.5) rotate(-45)">10-19歳</text>
<text transform="translate(946.9,577.5) rotate(-45)">20-29歳</text>
<text transform="translate(973.3,577.5) rotate(-45)">30-39歳</text>
<text transform="translate(999.7,577.5) rotate(-45)">40-49歳</text>
<text transform="translate(1026.1,577.5) rotate(-45)">50-59歳</text>
<text transform="translate(1052.5,577.5) rotate(-45)">60-64歳</text>
<text transform="translate(1078.9,577.5) rotate(-45)">65-69歳</text>
<text transform="translate(1105.3,577.5) rotate(-45)">70-79歳</text>
<text transform="translate(1131.8,577.5) rotate(-45)">80-89歳</text>
<text transform="translate(1158.2,577.5) rotate(-45)">90歳以上</text>
<text transform="translate(1184.6,577.5) rotate(-45)">不明</text>
</g>
</svg>

<!-- date picker -->
<div style="position:absolute;left:796px;top:622px;width:191px;height:46px;box-sizing:border-box;border:1px solid #9e9e9e;border-radius:4px"></div>
<div class="a" style="left:802px;top:617px;padding:0 4px;background:#fff;font-size:10.5px;color:#707070">表示日</div>
<div class="a" style="left:806px;top:638px;font-size:14px;color:#222">2023年2月28日</div>
<svg style="left:959.5px;top:637px" width="15" height="16.5" viewBox="3 1 18 20"><path fill="#555" d="M17 12h-5v5h5v-5zM16 1v2H8V1H6v2H5c-1.11 0-1.99.9-1.99 2L3 19c0 1.1.89 2 2 2h14c1.1 0 2-.9 2-2V5c0-1.1-.9-2-2-2h-1V1h-2zm3 18H5V8h14v11z"/></svg>
<div class="a" style="left:805px;top:719px;font-size:11px;color:#555">(注)</div>
<div class="a" style="left:824px;top:734px;font-size:11px;color:#555">総数のみの集計である</div>

<!-- chatbot -->
<div style="position:absolute;left:1053px;top:610px;width:210px;height:121px;box-sizing:border-box;border:5px solid #20a040;border-radius:22px;background:#fff"></div>
<div class="a" style="left:1086px;top:619.5px;font-size:14.8px;font-weight:bold;color:#111;-webkit-text-stroke-width:0.85px;letter-spacing:-0.1px">【東京都新型コロナ】</div>
<div class="a" style="left:1063px;top:643px;font-size:15.6px;font-weight:bold;color:#111;-webkit-text-stroke-width:0.85px">ご質問にチャットボットが</div>
<div class="a" style="left:1110px;top:662px;font-size:15.6px;font-weight:bold;color:#111;-webkit-text-stroke-width:0.85px">お答えします</div>
<svg style="left:0;top:0" width="1280" height="740">
<path d="M1117 711 C1100 708 1096 703 1096 698 C1096 690 1111 683.5 1130 683.5 C1149 683.5 1164 690 1164 698 C1164 706 1149 713 1130 713 C1127 713 1124 713 1122 712.5 L1118 716.5 Z" fill="#c1e5c8" stroke="#20a040" stroke-width="1.6"/>
<g fill="#20a040"><circle cx="1121.5" cy="700" r="1.5"/><circle cx="1130" cy="700" r="1.5"/><circle cx="1138.5" cy="700" r="1.5"/></g>
<path d="M1186 717 C1165 716 1151 711 1151 703 C1151 694.5 1167 688 1186 688 C1205 688 1221.5 694.5 1221.5 703 C1221.5 710 1212 715.5 1199 717 L1199 723.5 L1193 717.5 Z" fill="#7f7f7f"/>
<g fill="#fff"><circle cx="1176.5" cy="704" r="1.6"/><circle cx="1185" cy="704" r="1.6"/><circle cx="1193.5" cy="704" r="1.6"/></g>
<circle cx="1256" cy="613.7" r="8.6" fill="#f2f2f2" stroke="#cfcfcf" stroke-width="1"/>
<path d="M1252.5 610.2l7 7M1259.5 610.2l-7 7" stroke="#555" stroke-width="1.1"/>
</svg>

<!-- bottom line -->
<div style="position:absolute;left:0;top:739px;width:1280px;height:1px;background:#dedede"></div>
</body></html>
